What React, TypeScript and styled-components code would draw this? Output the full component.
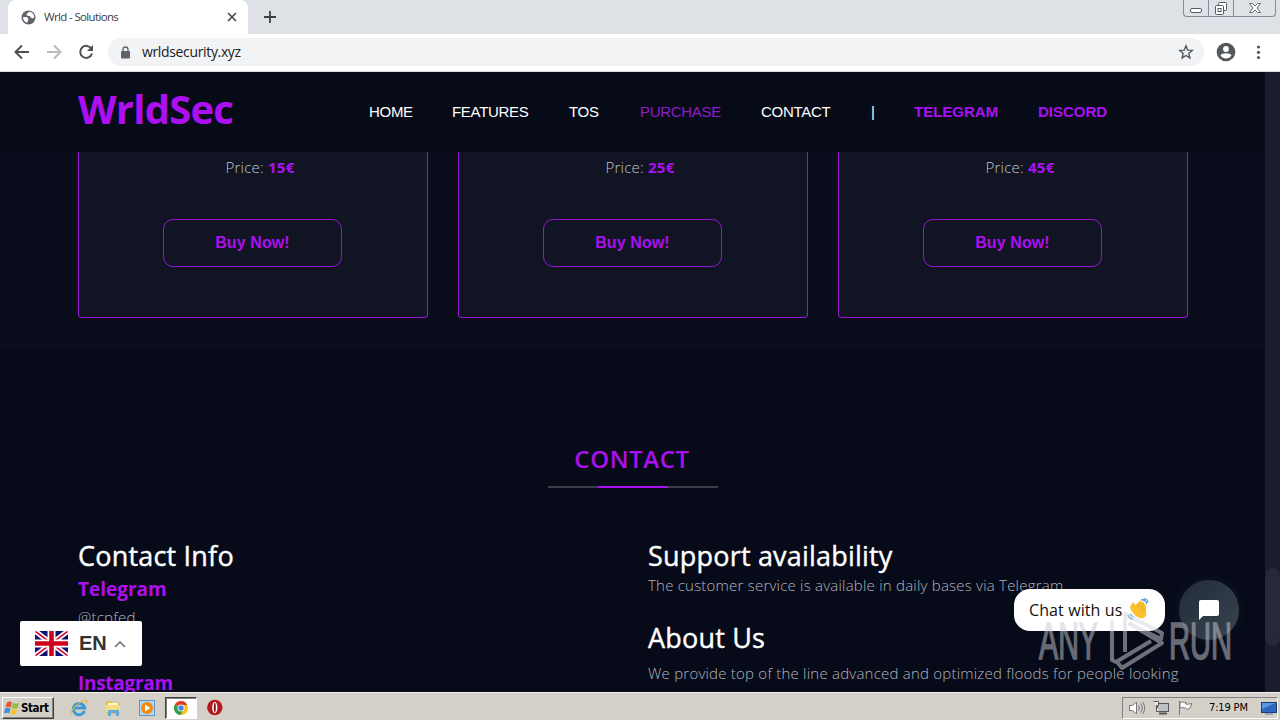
import React from "react";
import styled, { createGlobalStyle } from "styled-components";

const purple = "#ac10f0";

const GlobalStyle = createGlobalStyle`
  * {
    box-sizing: border-box;
  }
  body {
    margin: 0;
    overflow: hidden;
    font-family: "Open Sans", "Noto Sans", sans-serif;
  }
  h1, h2, h3, h4, p {
    margin: 0;
  }
  svg {
    display: block;
    flex: none;
  }
`;

const Screen = styled.div`
  position: relative;
  width: 1280px;
  height: 720px;
  overflow: hidden;
  display: flex;
  flex-direction: column;
`;

const TabStrip = styled.div`
  height: 34px;
  flex: none;
  display: flex;
  padding-left: 8px;
  background: #dee1e6;
`;

const Tab = styled.div`
  width: 240px;
  height: 34px;
  display: flex;
  align-items: center;
  padding: 0 11px 0 13px;
  background: #fff;
  border-radius: 8px 8px 0 0;
`;

const TabTitle = styled.span`
  flex: 1;
  margin-left: 8px;
  padding-bottom: 1px;
  font-size: 11.5px;
  letter-spacing: -0.65px;
  color: #3c4043;
`;

const NewTab = styled.div`
  padding: 11px 0 0 16px;
  flex: 1;
`;

const WindowControls = styled.div`
  display: flex;
  width: 93px;
  height: 17px;
  margin-right: 4px;
  border: 1px solid #868a94;
  border-top: none;
  border-radius: 0 0 4px 4px;
`;

const WindowButton = styled.div<{ $width: number }>`
  width: ${(props) => props.$width}px;
  display: flex;
  justify-content: center;
  & + & {
    border-left: 1px solid #868a94;
  }
`;

const Toolbar = styled.div`
  height: 38px;
  flex: none;
  display: flex;
  align-items: center;
  padding: 0 12px 1px 12px;
  background: #fff;
  border-bottom: 1px solid #dadce0;
`;

const NavIcons = styled.div`
  display: flex;
  gap: 12px;
  width: 96px;
`;

const Omnibox = styled.div`
  flex: 1;
  height: 28px;
  display: flex;
  align-items: center;
  padding: 0 10px 0 12px;
  border-radius: 14px;
  background: #f1f3f4;
`;

const Url = styled.span`
  flex: 1;
  margin-left: 11px;
  padding-bottom: 1px;
  font-size: 14px;
  letter-spacing: -0.35px;
  color: #202124;
`;

const ToolbarEnd = styled.div`
  display: flex;
  align-items: center;
  gap: 12px;
  margin-left: 10px;
`;

const Viewport = styled.div`
  height: 620px;
  flex: none;
  display: flex;
  overflow: hidden;
  background: #070b19;
`;

const Page = styled.main`
  width: 1265px;
  height: 620px;
  overflow: hidden;
`;

const Scrollbar = styled.div`
  width: 15px;
  padding-top: 496px;
  background: #1c1c2c;
`;

const Thumb = styled.div`
  height: 78px;
  background: #27283b;
  border-radius: 8px;
`;

const Header = styled.header`
  height: 80px;
  display: flex;
  align-items: center;
  padding-left: 78px;
  background: #070b18;
`;

const Logo = styled.h1`
  width: 291px;
  padding-bottom: 6px;
  font-size: 40px;
  line-height: 48px;
  font-weight: 700;
  letter-spacing: -0.8px;
  color: ${purple};
`;

const Nav = styled.nav`
  display: flex;
  gap: 40px;
  font-family: "Liberation Sans", Arial, sans-serif;
  font-size: 15px;
  line-height: 20px;
`;

const NavLink = styled.a<{ $width: number; $active?: boolean; $bold?: boolean }>`
  width: ${(props) => props.$width}px;
  white-space: nowrap;
  letter-spacing: ${(props) => (props.$bold ? "0" : "-0.3px")};
  font-weight: ${(props) => (props.$bold ? 700 : 400)};
  color: ${(props) => (props.$bold ? purple : props.$active ? "#8f1cc9" : "#fff")};
`;

const Pricing = styled.section`
  height: 196px;
  display: flex;
  gap: 30px;
  padding: 0 77px 30px 78px;
  background: #0a0e1c;
`;

const Card = styled.div`
  width: 350px;
  height: 166px;
  display: flex;
  flex-direction: column;
  align-items: center;
  padding-right: 1px;
  background: #111523;
  border: 1px solid #9a14d8;
  border-top: none;
  border-radius: 0 0 4px 4px;
`;

const Price = styled.p`
  margin: 3px 0 40px 15px;
  font-size: 15px;
  line-height: 24px;
  font-weight: 300;
  letter-spacing: 0.25px;
  color: #c3c5cc;
  b {
    font-weight: 700;
    color: ${purple};
  }
`;

const BuyButton = styled.button`
  width: 179px;
  height: 48px;
  padding: 0;
  background: transparent;
  border: 1px solid #9a14d8;
  border-radius: 10px;
  font-family: "Liberation Sans", Arial, sans-serif;
  font-size: 16px;
  font-weight: 700;
  letter-spacing: 0.1px;
  color: ${purple};
`;

const Contact = styled.section`
  padding: 96px 77px 0 78px;
`;

const SectionTitle = styled.h2`
  width: 170px;
  margin: 0 auto;
  padding-right: 2px;
  font-size: 24px;
  line-height: 30px;
  font-weight: 600;
  letter-spacing: 0.6px;
  text-align: center;
  color: ${purple};
`;

const Underline = styled.div`
  width: 170px;
  height: 2px;
  margin: 12px auto 51px;
  padding: 0 50px;
  background: #3b3d4b;
  &::after {
    content: "";
    display: block;
    height: 2px;
    background: ${purple};
  }
`;

const Columns = styled.div`
  display: grid;
  grid-template-columns: 570px 540px;
`;

const ColumnTitle = styled.h3<{ $gap?: number }>`
  margin-top: ${(props) => props.$gap || 0}px;
  font-size: 27px;
  line-height: 34px;
  font-weight: 500;
  letter-spacing: 0.2px;
  -webkit-text-stroke: 0.4px #fff;
  color: #fff;
`;

const Network = styled.h4<{ $gap?: number; $tight?: boolean }>`
  margin-top: ${(props) => props.$gap || 0}px;
  font-size: 19px;
  line-height: 28px;
  font-weight: 700;
  letter-spacing: ${(props) => (props.$tight ? "-0.3px" : "0")};
  color: ${purple};
`;

const Copy = styled.p<{ $gap?: number }>`
  margin-top: ${(props) => props.$gap || 0}px;
  font-size: 15px;
  line-height: 24px;
  font-weight: 300;
  letter-spacing: 0.22px;
  white-space: nowrap;
  color: #b0b3be;
`;

const LanguagePicker = styled.div`
  position: absolute;
  left: 20px;
  top: 621px;
  width: 122px;
  height: 45px;
  display: flex;
  align-items: center;
  padding-left: 15px;
  background: #fff;
  border-radius: 2px;
  font: 700 20px "Liberation Sans", Arial, sans-serif;
  color: #333;
  span {
    width: 35px;
    margin-left: 11px;
  }
`;

const ChatBubble = styled.div`
  position: absolute;
  left: 1014px;
  top: 589px;
  width: 151px;
  height: 42px;
  display: flex;
  align-items: center;
  padding-left: 15px;
  background: #fff;
  border-radius: 16px;
  font-size: 16px;
  letter-spacing: 0.1px;
  color: #111;
  span {
    width: 98px;
    white-space: nowrap;
  }
`;

const ChatButton = styled.div`
  position: absolute;
  left: 1179px;
  top: 580px;
  width: 60px;
  height: 60px;
  display: flex;
  align-items: center;
  justify-content: center;
  background: linear-gradient(135deg, #222c39, #3a444f);
  border-radius: 50%;
  box-shadow: 0 0 10px rgba(90, 110, 130, 0.15);
`;

const Watermark = styled.div`
  position: absolute;
  left: 1036px;
  top: 610px;
`;

const Taskbar = styled.footer`
  height: 28px;
  flex: none;
  display: flex;
  align-items: center;
  padding: 2px 2px 0;
  background: #d4d0c8;
  border-top: 1px solid #f4f2ee;
  font-family: "DejaVu Sans Condensed", "DejaVu Sans", sans-serif;
  color: #000;
`;

const StartButton = styled.div`
  width: 52px;
  height: 22px;
  display: flex;
  align-items: center;
  gap: 1px;
  padding-left: 1px;
  border: 1px solid;
  border-color: #fff #404040 #404040 #fff;
  box-shadow: inset -1px -1px #808080;
  font-size: 11.5px;
  font-weight: 700;
  letter-spacing: -0.4px;
`;

const QuickLaunch = styled.div`
  flex: 1;
  display: flex;
  margin-left: 9px;
`;

const LaunchItem = styled.div<{ $active?: boolean }>`
  width: 32px;
  height: 22px;
  margin-right: 2px;
  display: flex;
  align-items: center;
  justify-content: center;
  border: 1px solid transparent;
  ${(props) =>
    props.$active &&
    `
    background: #fff;
    border-color: #404040 #fff #fff #404040;
    box-shadow: inset 1px 1px #808080;
  `}
`;

const Tray = styled.div`
  width: 156px;
  height: 22px;
  display: flex;
  align-items: center;
  padding-left: 5px;
  gap: 7px;
  border: 1px solid;
  border-color: #808080 #fff #fff #808080;
`;

const Clock = styled.span`
  width: 45px;
  margin-left: 7px;
  font-size: 11px;
  letter-spacing: -0.15px;
  white-space: nowrap;
`;

const GlobeIcon = () => (
  <svg width="15" height="15" viewBox="0 0 15 15">
    <circle cx="7.5" cy="7.5" r="7" fill="#5f6368" />
    <path d="M2 7h3.6l1.6 1.2v1.7l-1 2.8C3.5 12.3 2 10 2 7zM6 3.4l2.4-1.6c2.8.4 4.6 2.4 4.9 5L12 8.5 9.7 7.8 8.9 6H6.8L5.4 4.8z" fill="#fff" />
  </svg>
);

const WaveIcon = () => (
  <svg width="24" height="24" viewBox="0 0 24 24">
    <path d="M3 9.5 5 5.2c.8-1.2 2-.8 2.2.3l1.4 1.6 4-4c1.4-1.1 2.3.1 1.6 1.2l1.4-.5c1.3-.3 1.8.8 1.1 1.7 1.4-.4 2 .8 1.3 1.8 1.4.2 1.4 1.3.8 2.1l.6 6.1c0 3.2-3.2 5.5-6.6 4.6C8.8 19 5.6 15.2 3 9.5z" fill="#fbc02d" />
    <path d="m10 10 4.4-4.4M12 12l5-4.7M14 14l4.2-4" stroke="#e59e20" strokeWidth=".8" fill="none" />
    <path d="M14 1.8c2.8-.4 5.5 1.6 5.9 4.4M16.8.7c2.2.3 3.9 1.8 4.2 4M1.1 17c.6 2.4 2.4 3.9 4.8 4.2M3.5 16c.4 1.5 1.5 2.5 3 2.8" stroke="#4aa3dd" strokeWidth="1.3" fill="none" />
  </svg>
);

const UkFlag = () => (
  <svg width="33" height="25" viewBox="0 0 33 25">
    <clipPath id="flag">
      <rect width="33" height="25" rx="2" />
    </clipPath>
    <g clipPath="url(#flag)">
      <path d="M0 0h33v25H0z" fill="#0a1172" />
      <path d="m0 0 33 25M33 0 0 25" stroke="#fff" strokeWidth="5" />
      <path d="m0 0 33 25M33 0 0 25" stroke="#d80027" strokeWidth="1.6" />
      <path d="M16.5 0v25M0 12.5h33" stroke="#fff" strokeWidth="8" />
      <path d="M16.5 0v25M0 12.5h33" stroke="#d0021b" strokeWidth="4.6" />
    </g>
  </svg>
);

const AnyRunMark = () => (
  <svg width="200" height="64" viewBox="0 0 200 64" opacity=".5">
    <g fill="#c9cbd0" stroke="#c9cbd0" strokeWidth="1.6" fontFamily="Liberation Sans, Arial, sans-serif" fontSize="52">
      <text x="3" y="49" textLength="59" lengthAdjust="spacingAndGlyphs">ANY</text>
      <text x="133" y="49" textLength="63" lengthAdjust="spacingAndGlyphs">RUN</text>
    </g>
    <path d="M76 10v40l4 2 35-21M89 42V4l37 19-1 6-31-15 32 19-40 25-4-5" fill="none" stroke="#d4d6da" strokeWidth="4" strokeLinejoin="round" />
  </svg>
);

const plans = ["15€", "25€", "45€"];

export default function App() {
  return (
    <Screen>
      <GlobalStyle />
      <TabStrip>
        <Tab>
          <GlobeIcon />
          <TabTitle>Wrld - Solutions</TabTitle>
          <svg width="10" height="10" viewBox="0 0 10 10">
            <path d="m1 1 8 8M9 1 1 9" stroke="#45494d" strokeWidth="1.7" />
          </svg>
        </Tab>
        <NewTab>
          <svg width="12" height="12" viewBox="0 0 12 12">
            <path d="M6 0v12M0 6h12" stroke="#3c4043" strokeWidth="1.8" />
          </svg>
        </NewTab>
        <WindowControls>
          <WindowButton $width={24}>
            <svg width="12" height="14" viewBox="0 0 12 14">
              <rect x=".5" y="8.5" width="11" height="4" rx="1.5" fill="#fff" stroke="#555a66" />
            </svg>
          </WindowButton>
          <WindowButton $width={25}>
            <svg width="14" height="16" viewBox="0 0 14 16">
              <rect x="4.5" y="2.5" width="8" height="8" rx="1" fill="#fff" stroke="#555a66" />
              <rect x="1.5" y="5.5" width="8" height="9" rx="1" fill="#fff" stroke="#555a66" />
              <rect x="4" y="8.5" width="3" height="3" fill="none" stroke="#555a66" />
            </svg>
          </WindowButton>
          <WindowButton $width={42}>
            <svg width="12" height="16" viewBox="0 0 12 16">
              <path d="M.5 3.5h3L6 6l2.5-2.5h3L8 8l3.5 4.500h-3L6 10l-2.500 2.500h-3L4 8z" fill="#fff" stroke="#555a66" strokeWidth=".9" />
            </svg>
          </WindowButton>
        </WindowControls>
      </TabStrip>
      <Toolbar>
        <NavIcons>
          <svg width="20" height="20" viewBox="0 0 20 20">
            <path d="M17 10H4M10 3.5 3.5 10l6.5 6.5" fill="none" stroke="#4d5156" strokeWidth="2" />
          </svg>
          <svg width="20" height="20" viewBox="0 0 20 20">
            <path d="M3 10h13M10 3.5l6.5 6.5-6.5 6.5" fill="none" stroke="#b9bbbe" strokeWidth="2" />
          </svg>
          <svg width="20" height="20" viewBox="0 0 20 20">
            <path d="M15.5 7A6 6 0 1 0 16 11.5" fill="none" stroke="#4d5156" strokeWidth="2" />
            <path d="M17 3v6h-6z" fill="#4d5156" />
          </svg>
        </NavIcons>
        <Omnibox>
          <svg width="11" height="13" viewBox="0 0 11 13">
            <rect x="1" y="5" width="9" height="7.5" rx="1" fill="#5f6368" />
            <path d="M3 5.5V3.5a2.5 2.5 0 0 1 5 0v2" fill="none" stroke="#5f6368" strokeWidth="1.3" />
          </svg>
          <Url>wrldsecurity.xyz</Url>
          <svg width="16" height="16" viewBox="0 0 16 16">
            <path d="m8 1.8 1.7 4.3 4.6.3-3.5 3 1.1 4.5L8 11.5l-3.9 2.4 1.1-4.5-3.5-3 4.6-.3z" fill="none" stroke="#54585d" strokeWidth="1.4" />
          </svg>
        </Omnibox>
        <ToolbarEnd>
          <svg width="22" height="22" viewBox="0 0 22 22">
            <circle cx="12" cy="11" r="9.3" fill="#54585d" />
            <circle cx="12" cy="8" r="2.9" fill="#fff" />
            <path d="M6.5 14.5c1-3 10-3 11 0-2.5 4-8.5 4-11 0z" fill="#fff" />
          </svg>
          <svg width="20" height="16" viewBox="0 0 20 16" fill="#54585d">
            <circle cx="10.5" cy="3" r="1.6" />
            <circle cx="10.5" cy="8.3" r="1.6" />
            <circle cx="10.5" cy="13.5" r="1.6" />
          </svg>
        </ToolbarEnd>
      </Toolbar>
      <Viewport>
        <Page>
          <Header>
            <Logo>WrldSec</Logo>
            <Nav>
              <NavLink $width={43}>HOME</NavLink>
              <NavLink $width={77}>FEATURES</NavLink>
              <NavLink $width={31}>TOS</NavLink>
              <NavLink $width={81} $active>PURCHASE</NavLink>
              <NavLink $width={70}>CONTACT</NavLink>
              <NavLink $width={3}>|</NavLink>
              <NavLink $width={84} $bold>TELEGRAM</NavLink>
              <NavLink $width={70} $bold>DISCORD</NavLink>
            </Nav>
          </Header>
          <Pricing>
            {plans.map((price) => (
              <Card key={price}>
                <Price>
                  Price: <b>{price}</b>
                </Price>
                <BuyButton>Buy Now!</BuyButton>
              </Card>
            ))}
          </Pricing>
          <Contact>
            <SectionTitle>CONTACT</SectionTitle>
            <Underline />
            <Columns>
              <div>
                <ColumnTitle>Contact Info</ColumnTitle>
                <Network $gap={2}>Telegram</Network>
                <Copy $gap={2}>@tcpfed</Copy>
                <Network $gap={40} $tight>Instagram</Network>
              </div>
              <div>
                <ColumnTitle>Support availability</ColumnTitle>
                <Copy>The customer service is available in daily bases via Telegram</Copy>
                <ColumnTitle $gap={24}>About Us</ColumnTitle>
                <Copy $gap={6}>
                  We provide top of the line advanced and optimized floods for people looking
                  <br />
                  to improve their network.
                </Copy>
              </div>
            </Columns>
          </Contact>
        </Page>
        <Scrollbar>
          <Thumb />
        </Scrollbar>
      </Viewport>
      <Taskbar>
        <StartButton>
          <svg width="16" height="16" viewBox="0 0 16 16">
            <path d="M3 2.5C5 1 6.500 1.500 8 2.500L6.800 7.500C5 6.500 3.500 6.500 1.500 7.500z" fill="#e8582c" />
            <path d="M9 3c2 1 3.500 1 6 0l-1.500 5c-2 1-3.700 1-5.700 0z" fill="#8cc03f" />
            <path d="M1.200 8.500c2-1 3.500-1 5.300 0L5.200 13.500C3.500 12.500 2 12.500 0 13.500z" fill="#3d8fd6" />
            <path d="M7.500 9c2 1 3.700 1 5.700 0l-1.500 5c-2 1-3.600 1-5.500 0z" fill="#f8c32c" />
          </svg>
          Start
        </StartButton>
        <QuickLaunch>
          <LaunchItem>
            <svg width="18" height="18" viewBox="0 0 18 18">
              <path d="M14.500 12A5.700 5.700 0 1 1 14.700 9H5" fill="none" stroke="#389bd8" strokeWidth="3" />
              <path d="M1.500 16C-1 12 10 1 16.500 1.500c1 .5.500 2-.5 3.500" fill="none" stroke="#e0b63c" strokeWidth="1.2" />
            </svg>
          </LaunchItem>
          <LaunchItem>
            <svg width="18" height="18" viewBox="0 0 18 18">
              <path d="M2 2h5l1 1.500h8V15H2z" fill="#dfc05a" />
              <path d="M4 4h10v3H4z" fill="#fff6c8" />
              <path d="M2 6h14v7H2z" fill="#f3dc86" />
              <path d="M4 17v-6h11v6h-3v-3H7v3z" fill="#66abd8" />
            </svg>
          </LaunchItem>
          <LaunchItem>
            <svg width="18" height="18" viewBox="0 0 18 18">
              <rect x="1.5" y="1.5" width="15" height="15" fill="#b5d7ef" stroke="#5697c8" />
              <circle cx="9" cy="9" r="6" fill="#f28a18" />
              <path d="m7 5.500 5.500 3.500L7 12.500z" fill="#fff" />
            </svg>
          </LaunchItem>
          <LaunchItem $active>
            <svg width="16" height="16" viewBox="0 0 16 16">
              <circle cx="8" cy="8" r="7" fill="#fbc116" />
              <path d="M8 8 1.900 4.500A7 7 0 0 1 14.300 5H8z" fill="#df3e30" />
              <path d="M1.900 4.500A7 7 0 0 0 7.500 15L10 10z" fill="#2f9e4f" />
              <circle cx="8" cy="8" r="3.5" fill="#fff" />
              <circle cx="8" cy="8" r="2.7" fill="#4285e8" />
            </svg>
          </LaunchItem>
          <LaunchItem>
            <svg width="17" height="17" viewBox="0 0 17 17">
              <circle cx="7.8" cy="8.5" r="7.7" fill="#b3191d" />
              <ellipse cx="7.8" cy="8.5" rx="2.6" ry="5.7" fill="#fff" />
              <ellipse cx="7.8" cy="8.5" rx="1" ry="4.7" fill="#8d1216" />
            </svg>
          </LaunchItem>
        </QuickLaunch>
        <Tray>
          <svg width="18" height="16" viewBox="0 0 18 16" fill="none" stroke="#77777a">
            <path d="M1.500 5.500h3L8.500 2v12l-4-3.500h-3z" fill="#fff" />
            <path d="M10.500 5.500q2 2.500 0 5M12.500 3.500q3.500 4.500 0 9M14.500 2q4.500 6 0 12" />
          </svg>
          <svg width="18" height="16" viewBox="0 0 18 16" stroke="#55565a">
            <rect x="4.5" y="3.5" width="11" height="8" fill="#bfc0c2" />
            <path d="M6 13.500h8" strokeWidth="2" />
            <path d="M.5 1.500h5v4h-2v6h3" fill="#eee" />
          </svg>
          <svg width="17" height="16" viewBox="0 0 17 16" stroke="#77777a" fill="#fff">
            <path d="M1.500 1v14M2 2.500c3-1 4 0 6 0l-.5 1.500c2 .5 4 0 6.500-.5l-2.500 5c-2 1-3 .5-4-.5-2-.5-3.500-.5-5.500 0z" />
          </svg>
          <Clock>7:19 PM</Clock>
          <svg width="16" height="14" viewBox="0 0 16 14">
            <rect x=".5" y="1.5" width="15" height="10" fill="#2d68bd" stroke="#183f7c" />
            <path d="M1 2h14L1 8z" fill="#5b96dd" />
            <path d="M4 13h8" stroke="#6a7a94" />
          </svg>
        </Tray>
      </Taskbar>
      <LanguagePicker>
        <UkFlag />
        <span>EN</span>
        <svg width="12" height="8" viewBox="0 0 12 8">
          <path d="m1 7 5-5 5 5" fill="none" stroke="#777" strokeWidth="1.7" />
        </svg>
      </LanguagePicker>
      <ChatBubble>
        <span>Chat with us</span>
        <WaveIcon />
      </ChatBubble>
      <ChatButton>
        <svg width="20" height="20" viewBox="0 0 20 20">
          <path d="M2 0h16q2 0 2 2v12q0 2-2 2H4l-4 4V2q0-2 2-2z" fill="#fff" />
        </svg>
      </ChatButton>
      <Watermark>
        <AnyRunMark />
      </Watermark>
    </Screen>
  );
}
